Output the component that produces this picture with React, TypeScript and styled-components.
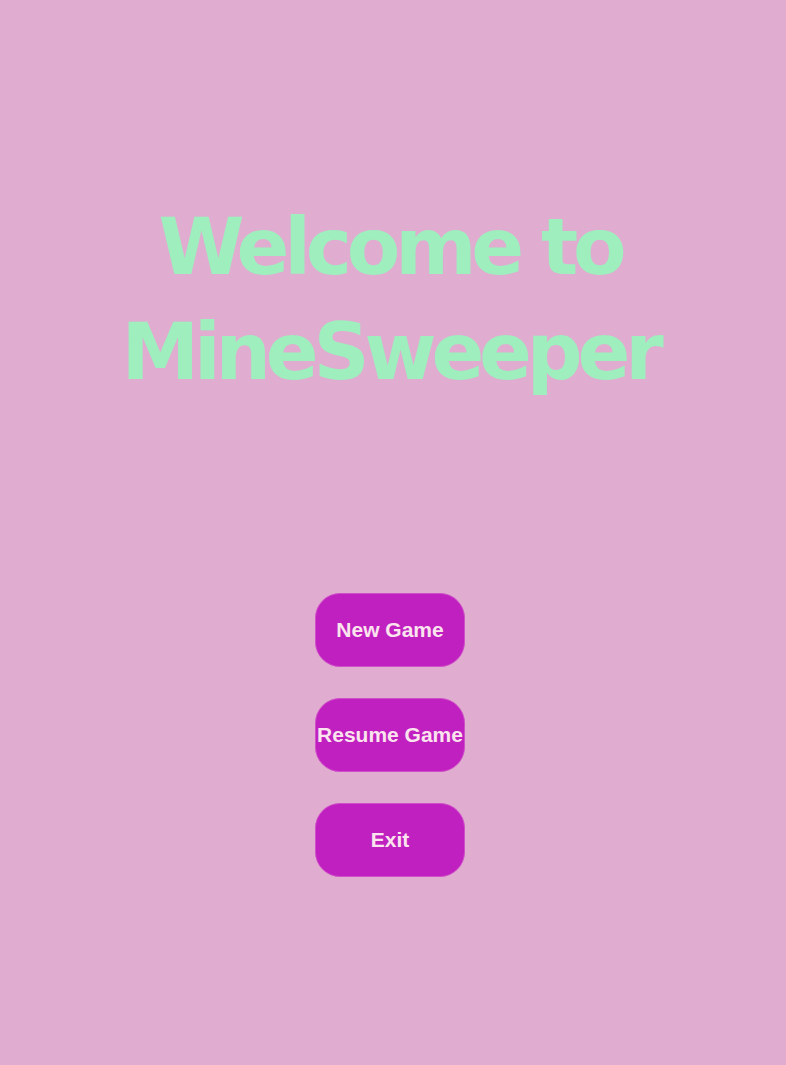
import styled, { createGlobalStyle } from "styled-components"

const GlobalStyle = createGlobalStyle`
  html, body {
    margin: 0;
    padding: 0;
    background: #e0acd0;
  }
`

const Screen = styled.div`
  width: 780px;
  min-height: 1065px;
  display: flex;
  flex-direction: column;
  align-items: center;
  background: #e0acd0;
`

const Title = styled.h1`
  margin: 195px 0 0;
  font-family: "DejaVu Sans", Tahoma, sans-serif;
  font-weight: bold;
  font-size: 78px;
  line-height: 105px;
  letter-spacing: -5.2px;
  color: #9eeebe;
  text-align: center;
`

const Menu = styled.div`
  margin-top: 188px;
  display: flex;
  flex-direction: column;
  gap: 31px;
`

const MenuButton = styled.button`
  width: 150px;
  height: 74px;
  padding: 0;
  border: 1px solid #d04ec8;
  border-radius: 25px;
  background: #c020c0;
  color: #fbe4ee;
  font-family: "Liberation Sans", Arial, sans-serif;
  font-weight: bold;
  font-size: 21px;
  cursor: pointer;
`

const App = () => {
  return (
    <Screen>
      <GlobalStyle />
      <Title>
        Welcome to
        <br />
        MineSweeper
      </Title>
      <Menu>
        <MenuButton>New Game</MenuButton>
        <MenuButton>Resume Game</MenuButton>
        <MenuButton>Exit</MenuButton>
      </Menu>
    </Screen>
  )
}

export default App
